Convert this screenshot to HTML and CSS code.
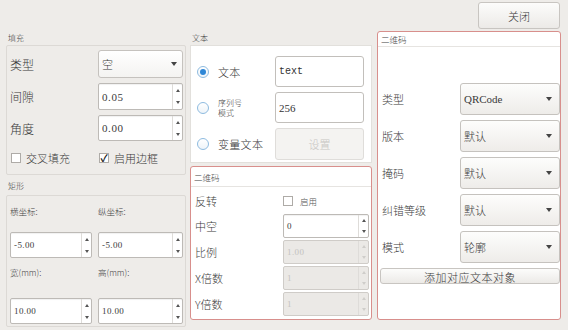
FILE: index.html
```html
<!DOCTYPE html>
<html>
<head>
<meta charset="utf-8">
<link rel="stylesheet" href="styles.css">
</head>
<body>
<div class="topbar"><button class="btn close">关闭</button></div>
<div class="main">
  <section class="col left">
    <div class="title">填充</div>
    <div class="group fill">
      <div class="lbl big">类型</div>
      <div class="combo white"><span>空</span><i class="arrow"></i></div>
      <div class="lbl big">间隙</div>
      <div class="spin"><span class="val">0.05</span><div class="arrows"><i class="up"></i><i class="down"></i></div></div>
      <div class="lbl big">角度</div>
      <div class="spin"><span class="val">0.00</span><div class="arrows"><i class="up"></i><i class="down"></i></div></div>
      <div class="check"><i class="box"></i><span>交叉填充</span></div>
      <div class="check"><i class="box on">✓</i><span>启用边框</span></div>
    </div>
    <div class="title second">矩形</div>
    <div class="group rect">
      <div class="small l1">横坐标:</div>
      <div class="small l1">纵坐标:</div>
      <div class="spin sm"><span class="val">-5.00</span><div class="arrows"><i class="up"></i><i class="down"></i></div></div>
      <div class="spin sm"><span class="val">-5.00</span><div class="arrows"><i class="up"></i><i class="down"></i></div></div>
      <div class="small l2">宽(mm):</div>
      <div class="small l2">高(mm):</div>
      <div class="spin sm"><span class="val">10.00</span><div class="arrows"><i class="up"></i><i class="down"></i></div></div>
      <div class="spin sm"><span class="val">10.00</span><div class="arrows"><i class="up"></i><i class="down"></i></div></div>
    </div>
  </section>

  <section class="col mid">
    <div class="title">文本</div>
    <div class="panel">
      <div class="radio-lbl"><i class="radio on"></i><span>文本</span></div>
      <div class="edit mono">text</div>
      <div class="radio-lbl"><i class="radio"></i><span class="two">序列号<br>模式</span></div>
      <div class="edit">256</div>
      <div class="radio-lbl"><i class="radio"></i><span>变量文本</span></div>
      <button class="btn set" disabled>设置</button>
    </div>
    <div class="qr qr-mid">
      <div class="qr-head">二维码</div>
      <div class="qr-body">
        <div class="lbl">反转</div>
        <div class="check tiny"><i class="box"></i><span>启用</span></div>
        <div class="lbl">中空</div>
        <div class="spin sm"><span class="val">0</span><div class="arrows"><i class="up"></i><i class="down"></i></div></div>
        <div class="lbl">比例</div>
        <div class="spin sm dis"><span class="val">1.00</span><div class="arrows"><i class="up"></i><i class="down"></i></div></div>
        <div class="lbl">X倍数</div>
        <div class="spin sm dis"><span class="val">1</span><div class="arrows"><i class="up"></i><i class="down"></i></div></div>
        <div class="lbl">Y倍数</div>
        <div class="spin sm dis"><span class="val">1</span><div class="arrows"><i class="up"></i><i class="down"></i></div></div>
      </div>
    </div>
  </section>

  <section class="col right">
    <div class="qr qr-right">
      <div class="qr-head">二维码</div>
      <div class="qr-rbody">
        <div class="lbl">类型</div>
        <div class="combo"><span class="val">QRCode</span><i class="arrow"></i></div>
        <div class="lbl">版本</div>
        <div class="combo"><span>默认</span><i class="arrow"></i></div>
        <div class="lbl">掩码</div>
        <div class="combo"><span>默认</span><i class="arrow"></i></div>
        <div class="lbl">纠错等级</div>
        <div class="combo"><span>默认</span><i class="arrow"></i></div>
        <div class="lbl">模式</div>
        <div class="combo"><span>轮廓</span><i class="arrow"></i></div>
        <button class="btn add">添加对应文本对象</button>
      </div>
    </div>
  </section>
</div>
</body>
</html>
```
FILE: styles.css
```css
* { box-sizing: border-box; }
body {
  margin: 0;
  width: 568px;
  height: 330px;
  overflow: hidden;
  background: #eeece9;
  font-family: "Noto Sans CJK SC", sans-serif;
  font-weight: 300;
  color: #3a3a3a;
}
.topbar {
  height: 31px;
  display: flex;
  justify-content: flex-end;
  padding: 2px 8px 0 0;
}
.btn {
  background: linear-gradient(#fcfcfb, #eceae7);
  border: 1px solid #c8c5c1;
  border-radius: 3px;
  font-family: "Noto Sans CJK SC", sans-serif;
  font-weight: 300;
  font-size: 11px;
  color: #3a3a3a;
  padding: 0;
}
.close { width: 82px; height: 27px; }

.main {
  display: grid;
  grid-template-columns: 180px 182px 185px;
  column-gap: 4px;
  padding-left: 6px;
}
.right { margin-left: 1px; }

.title {
  height: 14px;
  line-height: 14px;
  font-size: 8px;
  padding-left: 2px;
  color: #444;
}
.title.second { height: 20px; padding-top: 4px; }

.group {
  border: 1px solid #dcd9d5;
  border-radius: 2px;
}
.fill {
  height: 130px;
  padding: 4px 2px 4px 3px;
  display: grid;
  grid-template-columns: 88px 85px;
  grid-template-rows: 28px 27px 26px 20px;
  row-gap: 5px;
}
.fill .check { margin-top: 4px; }
.rect {
  height: 132px;
  padding: 4px 2px 0 3px;
  display: grid;
  grid-template-columns: 82px 85px;
  column-gap: 6px;
  grid-template-rows: 32px 26px 40px 26px;
}
.lbl {
  display: flex;
  align-items: center;
  font-size: 11px;
  color: #3a3a3a;
}
.lbl.big { font-size: 12px; }
.small {
  font-size: 8.5px;
  line-height: 14px;
  height: 14px;
  color: #444;
}
.l1 { margin-top: 4px; }
.l2 { margin-top: 7px; }

.val {
  font-family: "Liberation Serif", serif;
  font-weight: 400;
  letter-spacing: 0.6px;
}

.combo {
  display: flex;
  align-items: center;
  justify-content: space-between;
  background: linear-gradient(#fdfdfc, #eeece9);
  border: 1px solid #c5c2be;
  border-radius: 3px;
  padding: 0 7px 0 3px;
  font-size: 11px;
  color: #3a3a3a;
}
.combo.white { background: linear-gradient(#ffffff, #f4f3f1); padding-right: 5px; }
.combo .val { letter-spacing: 0; font-size: 11px; }
.arrow {
  width: 0; height: 0;
  border-left: 3px solid transparent;
  border-right: 3px solid transparent;
  border-top: 4px solid #444;
}

.spin {
  display: flex;
  align-items: center;
  justify-content: space-between;
  background: #fff;
  border: 1px solid #bdbab6;
  border-radius: 2px;
  font-size: 11px;
  color: #3a3a3a;
  padding-left: 3px;
  box-shadow: inset 0 1px 1px rgba(0,0,0,0.06);
}
.spin.sm { font-size: 9px; }
.spin.sm .val { letter-spacing: 0.4px; }
.arrows {
  width: 10px;
  align-self: stretch;
  border-left: 1px solid #dedcd9;
  display: flex;
  flex-direction: column;
}
.arrows i {
  flex: 1;
  display: flex;
  align-items: center;
  justify-content: center;
}
.arrows i::before {
  content: "";
  border-left: 2.5px solid transparent;
  border-right: 2.5px solid transparent;
}
.arrows .up::before { border-bottom: 3px solid #555; }
.arrows .down::before { border-top: 3px solid #555; }
.spin.dis {
  background: #ebe9e6;
  border-color: #cfccc8;
  color: #c4c2bf;
  box-shadow: none;
}
.spin.dis .arrows .up::before { border-bottom-color: #cfcdca; }
.spin.dis .arrows .down::before { border-top-color: #cfcdca; }

.check {
  display: flex;
  align-items: center;
  gap: 5px;
  font-size: 11px;
  padding-left: 1px;
}
.box {
  width: 10px;
  height: 10px;
  border: 1px solid #aeaba7;
  background: #fff;
  font-style: normal;
  font-size: 10px;
  line-height: 8px;
  color: #111;
  display: flex;
  justify-content: center;
  font-weight: bold;
}
.check.tiny { font-size: 8.5px; gap: 7px; padding-left: 0; color: #555; }

.panel {
  background: #fff;
  border: 1px solid #e2e0dc;
  height: 118px;
  padding: 10px 0 0 6px;
  display: grid;
  grid-template-columns: 78px 89px;
  grid-template-rows: 31px 31px 32px;
  row-gap: 5px;
}
.radio-lbl {
  display: flex;
  align-items: center;
  gap: 9px;
  font-size: 11px;
  letter-spacing: 0.3px;
}
.radio {
  width: 12px;
  height: 12px;
  border-radius: 50%;
  border: 1px solid #8ebbe0;
  background: linear-gradient(#ffffff, #eef4f9);
  position: relative;
  flex: none;
}
.radio.on::after {
  content: "";
  position: absolute;
  left: 2px; top: 2px;
  width: 6px; height: 6px;
  border-radius: 50%;
  background: #2f87d6;
}
.two { font-size: 8px; line-height: 10px; letter-spacing: 0; }
.edit {
  border: 1px solid #c2bfbb;
  border-radius: 3px;
  background: #fff;
  display: flex;
  align-items: center;
  padding-left: 3px;
  font-family: "Liberation Serif", serif;
  font-weight: 400;
  font-size: 11px;
  color: #333;
}
.edit.mono { font-family: "Liberation Mono", monospace; font-size: 10px; }
.btn.set {
  background: #f4f3f1;
  border: 1px solid #dfddda;
  color: #c8c6c3;
}

.qr {
  border: 1px solid #d88f8c;
  border-radius: 3px;
  background: #fff;
}
.qr-mid { margin-top: 3px; height: 154px; }
.qr-head {
  height: 20px;
  border-bottom: 1px solid #e6e4e1;
  font-size: 8.5px;
  line-height: 20px;
  padding-left: 3px;
  color: #444;
}
.qr-body {
  padding: 3px 2px 3px 4px;
  display: grid;
  grid-template-columns: 88px 86px;
  grid-template-rows: 22px 24px 24px 24px 24px;
  row-gap: 2px;
}
.qr-right { height: 289px; }
.qr-right .qr-head { height: 15px; line-height: 14px; }
.qr-rbody {
  padding: 36px 1px 0 4px;
  display: grid;
  grid-template-columns: 78px 100px;
  grid-template-rows: 32px 32px 32px 32px 32px 16px;
  row-gap: 5px;
}
.btn.add {
  grid-column: 1 / 3;
  margin-left: -2px;
  letter-spacing: 0.5px;
}
```
